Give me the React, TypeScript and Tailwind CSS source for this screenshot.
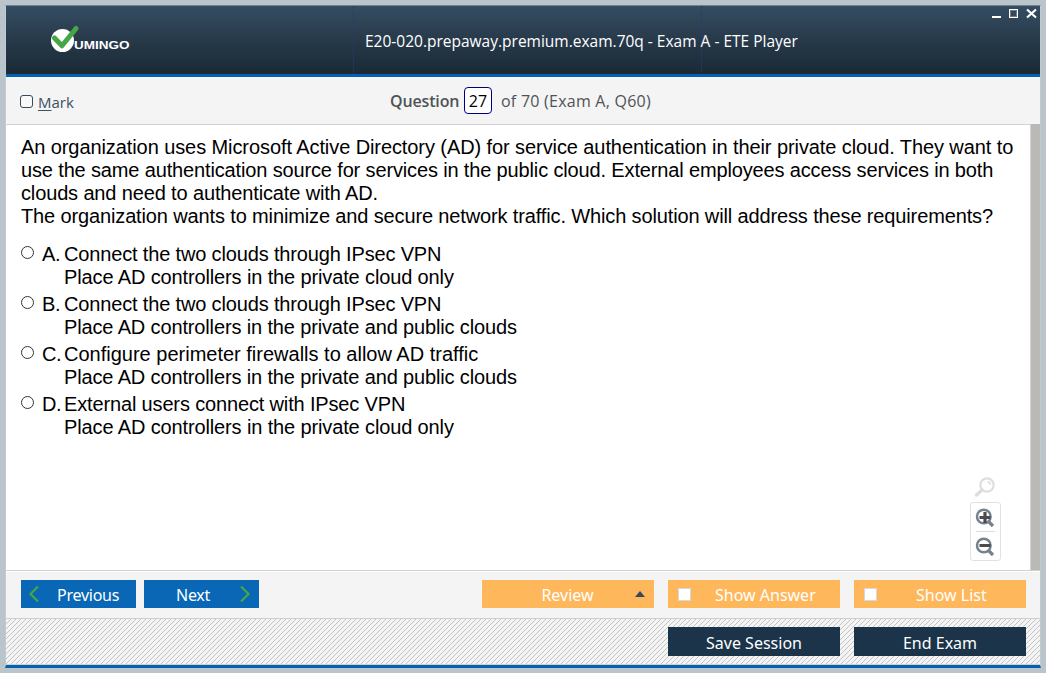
import React from "react";

const segoe = "font-['Open_Sans','Noto_Sans',sans-serif]";
const tahoma = "font-['Noto_Sans','Open_Sans',sans-serif]";

const options = [
  { letter: "A.", lines: [["Connect the two clouds through IPsec VPN", "tracking-[-0.155px]"], ["Place AD controllers in the private cloud only", "tracking-[-0.13px]"]] },
  { letter: "B.", lines: [["Connect the two clouds through IPsec VPN", "tracking-[-0.155px]"], ["Place AD controllers in the private and public clouds", "tracking-[-0.14px]"]] },
  { letter: "C.", lines: [["Configure perimeter firewalls to allow AD traffic", "tracking-[0px]"], ["Place AD controllers in the private and public clouds", "tracking-[-0.14px]"]] },
  { letter: "D.", lines: [["External users connect with IPsec VPN", "tracking-[-0.15px]"], ["Place AD controllers in the private cloud only", "tracking-[-0.13px]"]] },
];

function Logo() {
  return (
    <div className="relative ml-[45px] mt-[19px] h-8 w-[84px]">
      <svg className="absolute left-0 top-0" width="30" height="30" viewBox="0 0 30 30" fill="none">
        <circle cx="11.5" cy="15.5" r="11.5" fill="#fff" />
        <path d="M3.5 13 L11 20.8 L25 3.5" stroke="#45a645" strokeWidth="5" strokeLinecap="round" strokeLinejoin="round" />
      </svg>
      <span className="absolute left-[23px] top-[14px] origin-left scale-x-[1.35] font-['Liberation_Sans',sans-serif] text-[10px] font-bold leading-[13px] text-white">UMINGO</span>
    </div>
  );
}

function Header() {
  return (
    <header className="flex h-[71px] shrink-0 border-b-[3px] border-[#0460b0] bg-linear-to-b from-[#354c61] to-[#1a2935]">
      <div className="w-[347px] shrink-0">
        <Logo />
      </div>
      <div className="w-[349px] shrink-0 border-x border-dotted border-[#29386d]">
        <h1 className={`${segoe} ml-[11px] mt-[25px] whitespace-nowrap text-[15.5px] leading-5 text-white`}>
          E20-020.prepaway.premium.exam.70q - Exam A - ETE Player
        </h1>
      </div>
      <div className="flex flex-1 justify-end pr-[3px] pt-[2px]">
        <svg width="46" height="12" viewBox="0 0 46 12" fill="none" stroke="#fff" shapeRendering="crispEdges">
          <path d="M1 9h9" strokeWidth="2" />
          <rect x="18.5" y="1.5" width="8" height="8" strokeWidth="1" />
          <rect x="19.5" y="2.5" width="6" height="6" stroke="#777" strokeWidth="1" />
          <path d="M36 1.5 L45 9.5 M45 1.5 L36 9.5" strokeWidth="2.2" shapeRendering="auto" />
        </svg>
      </div>
    </header>
  );
}

function QuestionBar() {
  return (
    <div className={`${segoe} flex h-12 shrink-0 border-b border-[#d2d2d2] bg-[#f4f4f4] text-[#4f5356]`}>
      <label className="flex w-[384px] items-start pl-[14px] text-[#3d5064]">
        <span className="mt-[18px] h-[13px] w-[13px] rounded-[3px] border border-[#344b60] bg-[#f8f8f8]" />
        <span className="ml-[5px] mt-[15px] text-[15px] leading-5"><u className="underline-offset-2">M</u>ark</span>
      </label>
      <span className="mt-[14px] w-[74px] text-base font-semibold leading-5 tracking-[-0.15px]">Question</span>
      <span className="mt-[10px] flex h-[27px] w-7 items-center justify-center rounded-[4px] border border-[#00007f] bg-white text-base text-black">27</span>
      <span className="ml-[9px] mt-[14px] whitespace-nowrap text-base leading-5 tracking-[0.24px]">of 70 (Exam A, Q60)</span>
    </div>
  );
}

function ZoomTools() {
  return (
    <div className="absolute bottom-[9px] right-[39px] flex w-[31px] flex-col items-center">
      <svg width="22" height="22" viewBox="0 0 22 22" fill="none" stroke="#dedede" className="mb-[3px] mr-0.5">
        <circle cx="13" cy="8" r="6.7" strokeWidth="2.2" />
        <path d="M13.5 4.8c1.7 0 2.8 1.2 2.8 3" strokeWidth="1.5" />
        <path d="M8 13 L2.5 18" strokeWidth="3.4" strokeLinecap="round" />
      </svg>
      <div className="flex h-[59px] w-[31px] flex-col items-center rounded-[3px] border border-[#e2e2e2] bg-white">
        <svg width="20" height="28" viewBox="0 0 20 28" fill="none" className="mr-0.5">
          <circle cx="8.8" cy="13.5" r="6.8" stroke="#74828e" strokeWidth="2.5" />
          <path d="M13.5 18.5 L18 23" stroke="#74828e" strokeWidth="3.2" />
          <path d="M4.5 14.5h11M10 9v11" stroke="#4b4b4b" strokeWidth="3.2" />
        </svg>
        <div className="h-px w-[19px] shrink-0 bg-[#dcdcdc]" />
        <svg width="20" height="28" viewBox="0 0 20 28" fill="none" className="mr-0.5">
          <circle cx="8.8" cy="13.5" r="6.8" stroke="#74828e" strokeWidth="2.5" />
          <path d="M13.5 18.5 L18 23" stroke="#74828e" strokeWidth="3.2" />
          <path d="M4.5 13.5h11" stroke="#4b4b4b" strokeWidth="3" />
        </svg>
      </div>
    </div>
  );
}

function Content() {
  return (
    <main className="relative flex h-[446px] shrink-0 border-b border-[#d2d2d2] bg-white">
      <div className="flex-1 whitespace-nowrap pl-[15px] pt-[11px] font-['Liberation_Sans',Arial,sans-serif] text-[20px] leading-[23px] text-black">
        <p className="tracking-[-0.087px]">An organization uses Microsoft Active Directory (AD) for service authentication in their private cloud. They want to</p>
        <p className="tracking-[-0.145px]">use the same authentication source for services in the public cloud. External employees access services in both</p>
        <p className="tracking-[-0.14px]">clouds and need to authenticate with AD.</p>
        <p className="tracking-[-0.135px]">The organization wants to minimize and secure network traffic. Which solution will address these requirements?</p>
        <div className="mt-[15px] flex flex-col gap-1">
          {options.map((o) => (
            <label key={o.letter} className="flex">
              <span className="mt-[3px] h-[13px] w-[13px] rounded-full border border-[#333]" />
              <span className="ml-2 w-[22px] tracking-[-0.4px]">{o.letter}</span>
              <span className="flex flex-col items-start">
                {o.lines.map(([t, c]) => <span key={t} className={c}>{t}</span>)}
              </span>
            </label>
          ))}
        </div>
      </div>
      <div className="-mt-px w-[10px] border-l border-[#d2d2d2] bg-[#bab9b5]" />
      <ZoomTools />
    </main>
  );
}

const Chevron = ({ d }: { d: string }) => (
  <svg width="12" height="18" viewBox="0 0 12 18" fill="none" stroke="#45a645" strokeWidth="2.2"><path d={d} /></svg>
);

function Footer() {
  return (
    <footer className={`${tahoma} text-base leading-6 text-white`}>
      <div className="flex h-12 border-b border-[#cfcfcf] border-t border-t-white bg-[#f4f4f4] pl-[15px] pt-2">
        <button className="flex h-7 w-[115px] items-center bg-[#0967b5] pl-[7px]">
          <Chevron d="M10 1.5 L2.5 9 L10 16.5" /><span className="ml-[17px] mt-0.5 tracking-[-0.25px]">Previous</span>
        </button>
        <button className="ml-2 flex h-7 w-[115px] items-center bg-[#0967b5] pl-8">
          <span className="mt-0.5 w-[63px] text-left tracking-[-0.25px]">Next</span><Chevron d="M2 1.5 L9.5 9 L2 16.5" />
        </button>
        <button className="relative ml-[223px] h-7 w-[172px] bg-[#ffb75c] pt-0.5">
          <span className="-ml-px">Review</span>
          <span className="absolute right-[9px] top-[11px] border-x-[5px] border-b-[6px] border-x-transparent border-b-[#34495e]" />
        </button>
        <button className="ml-[14px] flex h-7 w-[172px] items-center bg-[#ffb75c] pl-[10px]">
          <span className="h-[13px] w-[13px] border border-[#d8d8d8] bg-white" /><span className="ml-6 mt-0.5">Show Answer</span>
        </button>
        <button className="ml-[14px] flex h-7 w-[172px] items-center bg-[#ffb75c] pl-[10px]">
          <span className="h-[13px] w-[13px] border border-[#d8d8d8] bg-white" /><span className="ml-[39px] mt-0.5">Show List</span>
        </button>
      </div>
      <div className="flex h-[46px] justify-end gap-[14px] border-b border-[#cfcfcf] bg-[#f4f4f4] bg-[linear-gradient(135deg,transparent_45%,#c4c4c4_45%,#c4c4c4_55%,transparent_55%)] bg-[length:5px_5px] pr-[14px] pt-2">
        <button className="h-[29px] w-[172px] bg-[#1b344a] pt-0.5">Save Session</button>
        <button className="h-[29px] w-[172px] bg-[#1b344a] pt-0.5">End Exam</button>
      </div>
    </footer>
  );
}

export default function App() {
  return (
    <div className="h-[673px] w-[1046px] overflow-hidden bg-[#b9c5cb] pl-[5px] pt-[5px]">
      <div className="flex h-[663px] w-[1036px] flex-col overflow-hidden border-x border-t border-b-[3px] border-[#c3c9cc] border-b-[#0460b0] border-t-[#73838d]">
        <Header />
        <QuestionBar />
        <Content />
        <Footer />
      </div>
    </div>
  );
}
